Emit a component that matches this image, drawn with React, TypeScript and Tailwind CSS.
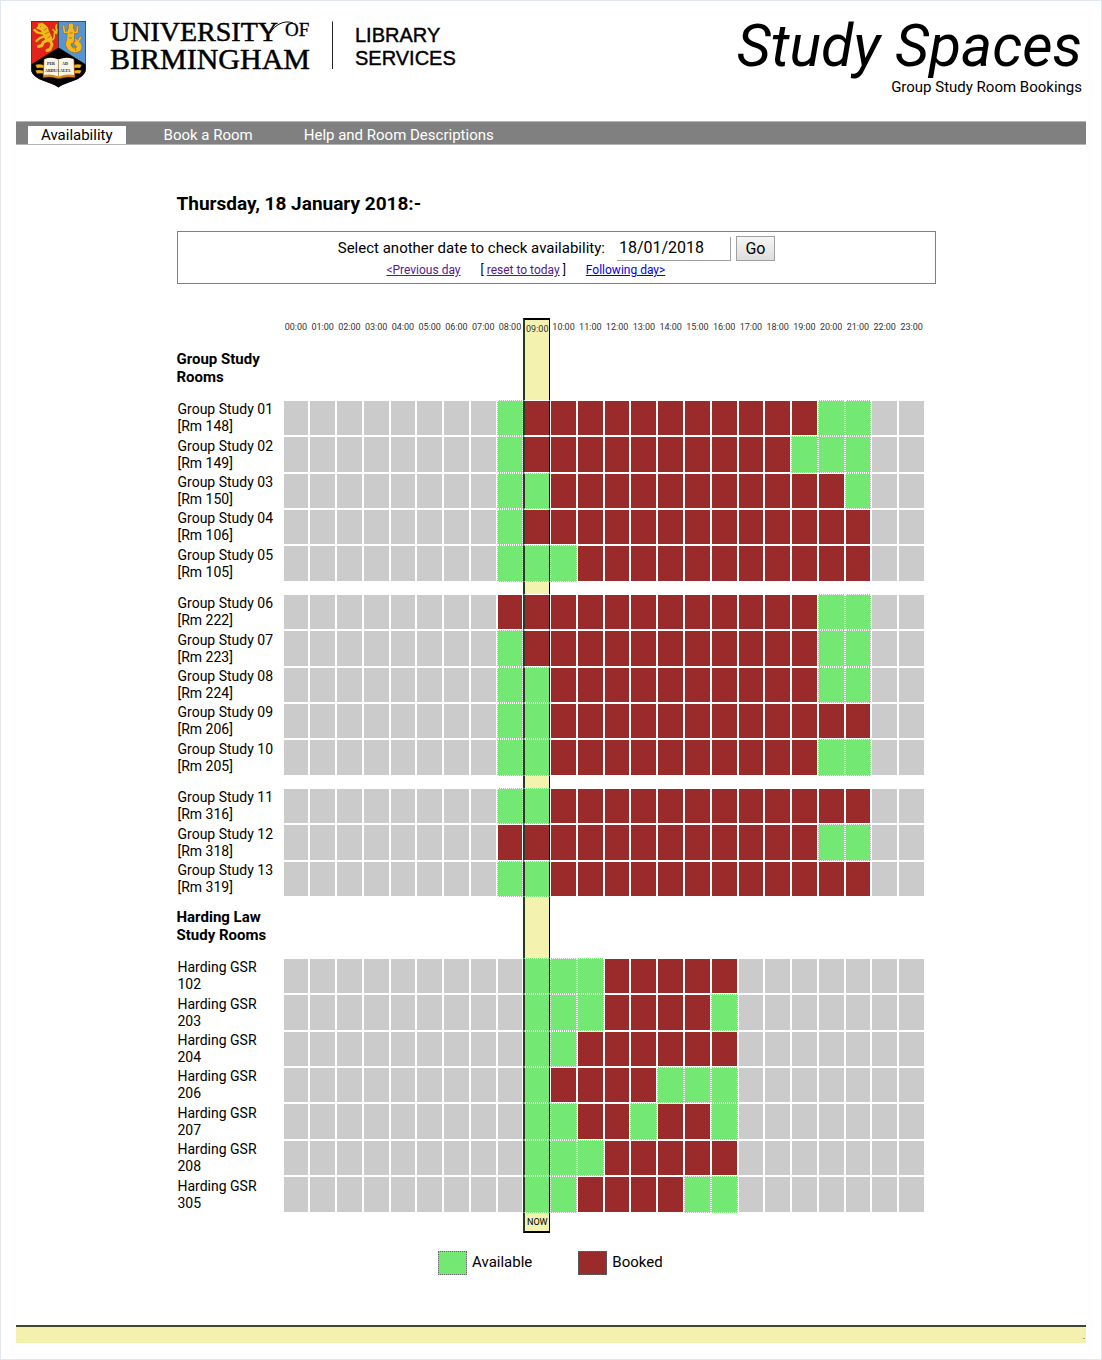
import React from "react";

type Room = { name: string[]; slots: string };
type Section = { title: string[]; groups: Room[][] };

const NOW = 9;
const HOURS = Array.from({ length: 24 }, (_, h) => `${String(h).padStart(2, "0")}:00`);

// One letter per hour: "-" closed, "A" available, "B" booked.
const slots = (from: number, run: string) => "-".repeat(from) + run + "-".repeat(24 - from - run.length);

const study = (n: string, rm: string, run: string): Room => ({
  name: [`Group Study ${n}`, `[Rm ${rm}]`],
  slots: slots(8, run),
});
const harding = (n: string, run: string): Room => ({ name: ["Harding GSR", n], slots: slots(9, run) });

const SECTIONS: Section[] = [
  {
    title: ["Group Study", "Rooms"],
    groups: [
      [
        study("01", "148", "ABBBBBBBBBBBAA"),
        study("02", "149", "ABBBBBBBBBBAAA"),
        study("03", "150", "AABBBBBBBBBBBA"),
        study("04", "106", "ABBBBBBBBBBBBB"),
        study("05", "105", "AAABBBBBBBBBBB"),
      ],
      [
        study("06", "222", "BBBBBBBBBBBBAA"),
        study("07", "223", "ABBBBBBBBBBBAA"),
        study("08", "224", "AABBBBBBBBBBAA"),
        study("09", "206", "AABBBBBBBBBBBB"),
        study("10", "205", "AABBBBBBBBBBAA"),
      ],
      [
        study("11", "316", "AABBBBBBBBBBBB"),
        study("12", "318", "BBBBBBBBBBBBAA"),
        study("13", "319", "AABBBBBBBBBBBB"),
      ],
    ],
  },
  {
    title: ["Harding Law", "Study Rooms"],
    groups: [
      [
        harding("102", "AAABBBBB"),
        harding("203", "AAABBBBA"),
        harding("204", "AABBBBBB"),
        harding("206", "ABBBBAAA"),
        harding("207", "AABBABBA"),
        harding("208", "AAABBBBB"),
        harding("305", "AABBBBAA"),
      ],
    ],
  },
];

const nowEdges = "border-l-2 border-r border-l-[#2b3a22] border-r-black";

function slotClass(state: string, now: boolean) {
  const fill =
    state === "A"
      ? "border-dotted bg-[#73e873]"
      : state === "B"
        ? "bg-[#9b2b2b]"
        : "bg-[#cbcbcb]";
  return now
    ? `${fill} border-y border-y-white [border-left-style:solid] [border-right-style:solid] ${nowEdges}`
    : `${fill} border border-white`;
}

const label: Record<string, string> = { A: "Available", B: "Booked", "-": "Closed" };

function SpacerCells({ count }: { count: number }) {
  return (
    <>
      {Array.from({ length: count }, (_, h) => (
        <td key={h} className={h === NOW ? `bg-[#f3f3af] ${nowEdges}` : ""} />
      ))}
    </>
  );
}

// Limbs of the lion and the mermaid: [path, thickness].
const FIGURES: [string, number][] = [
  ["M41.500 26.500L44.500 29", 7.5],
  ["M45 31L48.500 38.500", 7.5],
  ["M37.500 28L40 28.500", 2.5],
  ["M38.500 23.800L39.500 25", 1.5],
  ["M42 33.500L37.500 32.500L34.500 30", 2.6],
  ["M44 36.500L40 38L36.500 41", 2.6],
  ["M47.500 40L43 42.500L42 45.500L38.500 46.500", 3.2],
  ["M50 40L52 44.500L50 49.500L47 50.500", 3.2],
  ["M51.500 40C57 39 52 34 55.500 32C58.500 30 54.500 29 56.500 25", 1.8],
  ["M52.800 29.500L56.500 33.500L57 29.500", 1.5],
  ["M71 25.500L71 27", 5],
  ["M71 31L70.500 40", 7],
  ["M68.500 32L64.500 32.500L63.500 26", 2],
  ["M73 32L77 32.500L77.500 26.500", 2],
  ["M69.500 40C66 46 71 50.500 75.500 50C81 49.500 80 44.500 76.500 43.500", 5],
  ["M77.500 42.500L80.500 37.500M78 42.500L75.500 39.500", 2],
];

function Logo() {
  return (
    <svg viewBox="31 11 430 77" className="h-[77px] w-[430px] shrink-0" role="img" aria-label="University of Birmingham Library Services">
      <clipPath id="shield">
        <path d="M31 21H86V68C86 73 83 76 78 79C72 82 63 84 58.500 87.500C54 84 45 82 39 79C34 76 31 73 31 68Z" />
      </clipPath>
      <g clipPath="url(#shield)">
        <path d="M31 21H58.500V88H31Z" fill="#e32219" />
        <path d="M58.500 21H86V88H58.500Z" fill="#5695d0" />
        <path d="M58.500 47.500L87 65V88H30V65Z" fill="#000" />
        <path d="M58.500 21V48" stroke="#222" strokeWidth="0.700" />
        <path d="M31.300 88V21.400H85.700V88" stroke="#333" strokeWidth="0.800" fill="none" />
      </g>
      <g fill="none" strokeLinecap="round" strokeLinejoin="round" stroke="#a65a10">
        {FIGURES.map(([d, w]) => (
          <path key={d} d={d} strokeWidth={w + 0.4} />
        ))}
      </g>
      <g fill="none" strokeLinecap="round" strokeLinejoin="round" stroke="#f5b81c">
        {FIGURES.map(([d, w]) => (
          <path key={d} d={d} strokeWidth={w - 0.3} />
        ))}
      </g>
      <path d="M40 26.500H41M44 30.500L47 28M45 34L49 32M47.500 38L50.500 36M69.500 33H72.500M69 38H72M71 45L73.500 48.500M75 48L76 51" stroke="#a65a10" strokeWidth="0.700" fill="none" />
      <g fill="#f3b51b" stroke="#8a4a08" strokeWidth="0.350">
        <path d="M35.500 65Q39 63.500 44.500 65.500V68Q40 67.500 37 68ZM35.500 70.500Q39 69.500 44.500 71V73.500Q40 73 37 73.500ZM81.500 65Q78 63.500 73 65.500V68Q77.500 67.500 80 68ZM81.500 70.500Q78 69.500 73 71V73.500Q77.500 73 80 73.500Z" />
        <path d="M44 59.500H74L75 77.500Q66 76 60 78.500H57.500Q51 76 43 77.500Z" fill="#d98a17" />
      </g>
      <path d="M44.500 59Q52 56.500 58.500 59.500V76.500Q51 73.500 43.800 75ZM73.500 59Q65.500 56.500 58.500 59.500V76.500Q66 73.500 74 75Z" fill="#faf5e6" />
      <path d="M58.500 59.500V76.500" stroke="#a88f61" strokeWidth="0.900" />
      <g fontFamily="Liberation Serif, serif" fontWeight="700" fontSize="4" fill="#222">
        <text x="47" y="65">PER</text>
        <text x="62" y="65">AD</text>
        <text x="45" y="72">ARDUA</text>
        <text x="60" y="72">ALTA</text>
      </g>
      <g fontFamily="Liberation Serif, serif" fill="#000" stroke="#000" strokeWidth="0.500">
        <text x="110" y="41" fontSize="28">UNIVERSITY</text>
        <text x="110" y="69" fontSize="30">BIRMINGHAM</text>
        <text x="285" y="35.500" fontSize="19" strokeWidth="0.300">OF</text>
      </g>
      <path d="M270 33C275 25 284 19.500 293 23" stroke="#000" strokeWidth="1" fill="none" />
      <path d="M332.500 21.500V69" stroke="#222" strokeWidth="1" />
      <g fontFamily="Liberation Sans, sans-serif" fontSize="20" fill="#000" stroke="#000" strokeWidth="0.400">
        <text x="355" y="42">LIBRARY</text>
        <text x="355" y="65">SERVICES</text>
      </g>
    </svg>
  );
}

export default function App() {
  return (
    <div className="border border-[#e3e6f3] bg-white px-[15px] font-[Roboto,sans-serif] text-[15px] text-black">
      <header className="flex h-[120px] items-start justify-between pt-2.5 pl-[15px] pr-1">
        <Logo />
        <div className="pt-[9px] text-right">
          <h1 className="text-[59px] leading-[52px] italic">Study Spaces</h1>
          <p className="leading-[30px]">Group Study Room Bookings</p>
        </div>
      </header>

      <nav className="flex h-6 items-end gap-[25px] border-y border-[#b5b5b5] bg-[#808080] pl-3 leading-[18px] text-white">
        <a href="#availability" aria-current="page" className="bg-white px-[13px] text-black">Availability</a>
        <a href="#book" className="px-[13px]">Book a Room</a>
        <a href="#help" className="px-[13px]">Help and Room Descriptions</a>
      </nav>

      <main className="ml-[15%] w-[71%] pt-12">
        <h2 className="text-[19px] leading-[22px] font-bold">Thursday, 18 January 2018:-</h2>

        <form className="mt-4 flex h-[53px] flex-col items-center border border-[#808080] pt-1" onSubmit={(e) => e.preventDefault()}>
          <div className="flex items-center">
            <label htmlFor="date">Select another date to check availability:</label>
            <input id="date" type="text" defaultValue="18/01/2018" className="ml-3 h-6 w-[114px] border-r border-b border-[#a0a0a0] pl-0.5 text-base outline-none" />
            <button type="submit" className="ml-[5px] h-[25px] w-[39px] border border-[#a0a0a0] bg-linear-to-b from-[#f6f6f6] to-[#dddddd] text-base leading-5">Go</button>
          </div>
          <div className="flex pr-[61px] text-[12px] leading-[18px]">
            <a href="#previous" className="text-[#551a8b] underline">&lt;Previous day</a>
            <span className="mx-5">
              [ <a href="#today" className="text-[#551a8b] underline">reset to today</a> ]
            </span>
            <a href="#following" className="text-[#0000ee] underline">Following day&gt;</a>
          </div>
        </form>

        <div className="mt-[34px] pr-[11px]">
          <table className="w-full table-fixed border-separate border-spacing-0">
            <colgroup>
              <col className="w-[106px]" />
              {HOURS.map((h) => (
                <col key={h} />
              ))}
            </colgroup>
            <thead>
              <tr className="h-5 text-center text-[9px] leading-3 text-[#333]">
                <td />
                {HOURS.map((h, i) => (
                  <th
                    key={h}
                    scope="col"
                    className={i === NOW ? `border-t-2 border-t-black bg-[#f3f3af] p-0 font-normal ${nowEdges}` : "p-0 pb-0.5 font-normal"}
                  >
                    {h}
                  </th>
                ))}
              </tr>
            </thead>
            {SECTIONS.map((section, s) => (
              <tbody key={s}>
                <tr className={s === 0 ? "h-[62px]" : "h-[61px]"}>
                  <th scope="rowgroup" className="p-0 pb-[3px] text-left text-[15px] leading-[18px] font-bold">
                    {section.title[0]}
                    <br />
                    {section.title[1]}
                  </th>
                  <SpacerCells count={24} />
                </tr>
                {section.groups.map((rooms, g) => (
                  <React.Fragment key={g}>
                    {g > 0 && (
                      <tr className="h-3">
                        <td />
                        <SpacerCells count={24} />
                      </tr>
                    )}
                    {rooms.map((room, r) => (
                      <tr key={r} className={r % 5 === 1 || r % 5 === 4 ? "h-[37px]" : "h-9"}>
                        <th scope="row" className="p-0 pl-px text-left text-[14px] leading-[17px] font-normal whitespace-nowrap">
                          {room.name[0]}
                          <br />
                          {room.name[1]}
                        </th>
                        {room.slots.split("").map((state, h) => (
                          <td key={h} title={label[state]} className={slotClass(state, h === NOW)} />
                        ))}
                      </tr>
                    ))}
                  </React.Fragment>
                ))}
              </tbody>
            ))}
            <tfoot>
              <tr className="h-5 text-center text-[9px] leading-3">
                <td colSpan={10} />
                <td className={`border-b-2 border-b-black bg-[#f3f3af] p-0 ${nowEdges}`}>NOW</td>
                <td colSpan={14} />
              </tr>
            </tfoot>
          </table>
        </div>

        <div className="mt-[18px] flex items-center justify-center gap-[46px] pr-3">
          <div className="flex items-center gap-[5px]">
            <span className="h-6 w-[29px] border border-dotted border-[#666] bg-[#73e873]" />
            <span className="leading-5 pb-0.5">Available</span>
          </div>
          <div className="flex items-center gap-[5px]">
            <span className="h-6 w-[29px] border border-dotted border-[#666] bg-[#9b2b2b]" />
            <span className="leading-5 pb-0.5">Booked</span>
          </div>
        </div>
      </main>

      <footer className="mt-[50px] mb-4 h-[18px] border-t-2 border-[#45452f] bg-[#f4f1ae] pr-px text-right text-[9px] leading-[18px]">.</footer>
    </div>
  );
}
